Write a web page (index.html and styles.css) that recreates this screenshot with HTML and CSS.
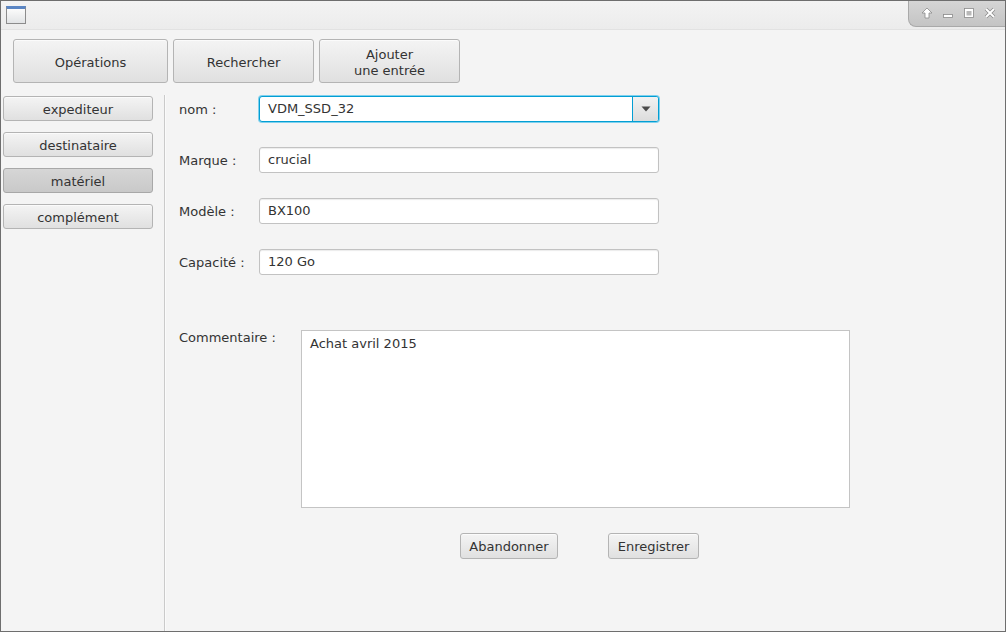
FILE: index.html
```html
<!DOCTYPE html>
<html lang="fr">
<head>
<meta charset="utf-8">
<link rel="stylesheet" href="styles.css">
</head>
<body>
<div class="window">
  <div class="titlebar">
    <div class="app-icon"></div>
    <div class="controls">
      <svg width="12" height="12" viewBox="0 0 12 12"><path d="M6 1 L11 6 H8 V11 H4 V6 H1 Z" fill="#fff" stroke="#8a8a8a" stroke-width="0.8"/></svg>
      <svg width="12" height="12" viewBox="0 0 12 12"><rect x="1.5" y="7.5" width="9" height="3" fill="#fff" stroke="#8a8a8a" stroke-width="0.8"/></svg>
      <svg width="12" height="12" viewBox="0 0 12 12"><rect x="1.5" y="1.5" width="9" height="9" fill="#fff" stroke="#8a8a8a" stroke-width="0.8"/><rect x="3.5" y="4" width="5" height="4.5" fill="#b8b8b8"/></svg>
      <svg width="12" height="12" viewBox="0 0 12 12"><path d="M2 2 L10 10 M10 2 L2 10" stroke="#8a8a8a" stroke-width="3.4"/><path d="M2 2 L10 10 M10 2 L2 10" stroke="#fff" stroke-width="2"/></svg>
    </div>
  </div>
  <div class="toolbar">
    <button class="btn big w1">Opérations</button>
    <button class="btn big w2">Rechercher</button>
    <button class="btn big w2">Ajouter<br>une entrée</button>
  </div>
  <div class="main">
    <div class="sidebar">
      <button class="btn side">expediteur</button>
      <button class="btn side">destinataire</button>
      <button class="btn side selected">matériel</button>
      <button class="btn side">complément</button>
    </div>
    <div class="content">
      <div class="form">
        <label class="lbl">nom :</label>
        <div class="combo">
          <span class="combo-text">VDM_SSD_32</span>
          <span class="combo-arrow"><svg width="10" height="6" viewBox="0 0 10 6"><path d="M0.5 0.5 H9.5 L5 5.5 Z" fill="#4a4a4a"/></svg></span>
        </div>
        <label class="lbl">Marque :</label>
        <div class="field">crucial</div>
        <label class="lbl">Modèle :</label>
        <div class="field">BX100</div>
        <label class="lbl">Capacité :</label>
        <div class="field">120 Go</div>
      </div>
      <div class="comment-row">
        <label class="lbl comment-lbl">Commentaire :</label>
        <div class="textarea">Achat avril 2015</div>
      </div>
      <div class="actions">
        <button class="btn small w-ab">Abandonner</button>
        <button class="btn small w-en">Enregistrer</button>
      </div>
    </div>
  </div>
</div>
</body>
</html>
```

FILE: styles.css
```css
* { box-sizing: border-box; }
html, body { margin: 0; padding: 0; }
body {
  font-family: "DejaVu Sans", "Liberation Sans", sans-serif;
  font-size: 13px;
  color: #333;
  background: #f2f2f2;
}
.window {
  width: 1006px;
  height: 632px;
  border: 1px solid #6e6e6e;
  background: #f4f4f4;
  display: flex;
  flex-direction: column;
  overflow: hidden;
}
.titlebar {
  height: 29px;
  flex: none;
  background: linear-gradient(#f3f3f3, #ececec);
  border-bottom: 1px solid #e2e2e2;
  display: flex;
  align-items: flex-start;
  justify-content: space-between;
}
.app-icon {
  margin: 5px 0 0 5px;
  width: 20px;
  height: 18px;
  border: 1px solid #8c8c8c;
  border-top: 3px solid #5b86c4;
  background: linear-gradient(#fbfbfb, #e2e4e6);
}
.controls {
  height: 27px;
  width: 98px;
  margin-top: -1px;
  margin-right: -1px;
  background: linear-gradient(#d6d6d6, #c4c4c4);
  border-left: 1px solid #a9a9a9;
  border-bottom: 1px solid #a9a9a9;
  border-bottom-left-radius: 8px;
  display: flex;
  align-items: center;
  justify-content: space-around;
  padding: 0 6px 0 8px;
}
.btn {
  font-family: inherit;
  font-size: 13px;
  color: #333;
  border: 1px solid #b4b4b4;
  border-radius: 3px;
  background: linear-gradient(#f4f4f4, #e0e0e0);
  box-shadow: inset 0 1px 0 #fbfbfb;
  padding: 1px 0 0;
  line-height: 16px;
  margin: 0;
}
.toolbar {
  flex: none;
  display: flex;
  gap: 5px;
  padding: 9px 0 0 12px;
  height: 65px;
}
.big { height: 44px; padding-top: 3px; }
.w1 { width: 155px; }
.w2 { width: 141px; }
.main {
  flex: 1;
  display: flex;
  min-height: 0;
}
.sidebar {
  width: 164px;
  flex: none;
  padding: 1px 0 0 2px;
  display: flex;
  flex-direction: column;
  gap: 11px;
  border-right: 1px solid #cacaca;
  box-shadow: 1px 0 0 #fafafa;
}
.side {
  width: 150px;
  height: 25px;
  padding-top: 3px;
}
.side.selected {
  background: linear-gradient(#d6d6d6, #c9c9c9);
  border-color: #a8a8a8;
  box-shadow: none;
}
.content {
  flex: 1;
  padding: 1px 0 0 14px;
  display: flex;
  flex-direction: column;
}
.form {
  display: grid;
  grid-template-columns: 80px 400px;
  row-gap: 25px;
  align-items: center;
}
.lbl { color: #333; }
.combo {
  height: 26px;
  border: 1px solid #039ed3;
  box-shadow: 0 0 0 1px #7fd1ee;
  border-radius: 3px;
  background: #fff;
  display: flex;
  align-items: stretch;
  overflow: hidden;
}
.combo-text {
  flex: 1;
  padding-left: 8px;
  line-height: 24px;
  border-right: 1px solid #039ed3;
}
.combo-arrow {
  width: 25px;
  flex: none;
  background: linear-gradient(#f2f2f2, #dcdcdc);
  display: flex;
  align-items: center;
  justify-content: center;
}
.field {
  height: 26px;
  border: 1px solid #c2c2c2;
  border-radius: 3px;
  background: #fff;
  box-shadow: inset 0 1px 1px #ececec;
  padding-left: 8px;
  line-height: 24px;
}
.comment-row {
  margin-top: 55px;
  display: flex;
  align-items: flex-start;
}
.comment-lbl {
  width: 122px;
  line-height: 16px;
}
.textarea {
  width: 549px;
  height: 178px;
  border: 1px solid #c4c4c4;
  background: #fff;
  padding: 5px 8px;
  line-height: 16px;
}
.actions {
  display: flex;
  gap: 50px;
  padding-left: 281px;
  margin-top: 25px;
}
.small { height: 26px; }
.w-ab { width: 98px; }
.w-en { width: 91px; }
```
